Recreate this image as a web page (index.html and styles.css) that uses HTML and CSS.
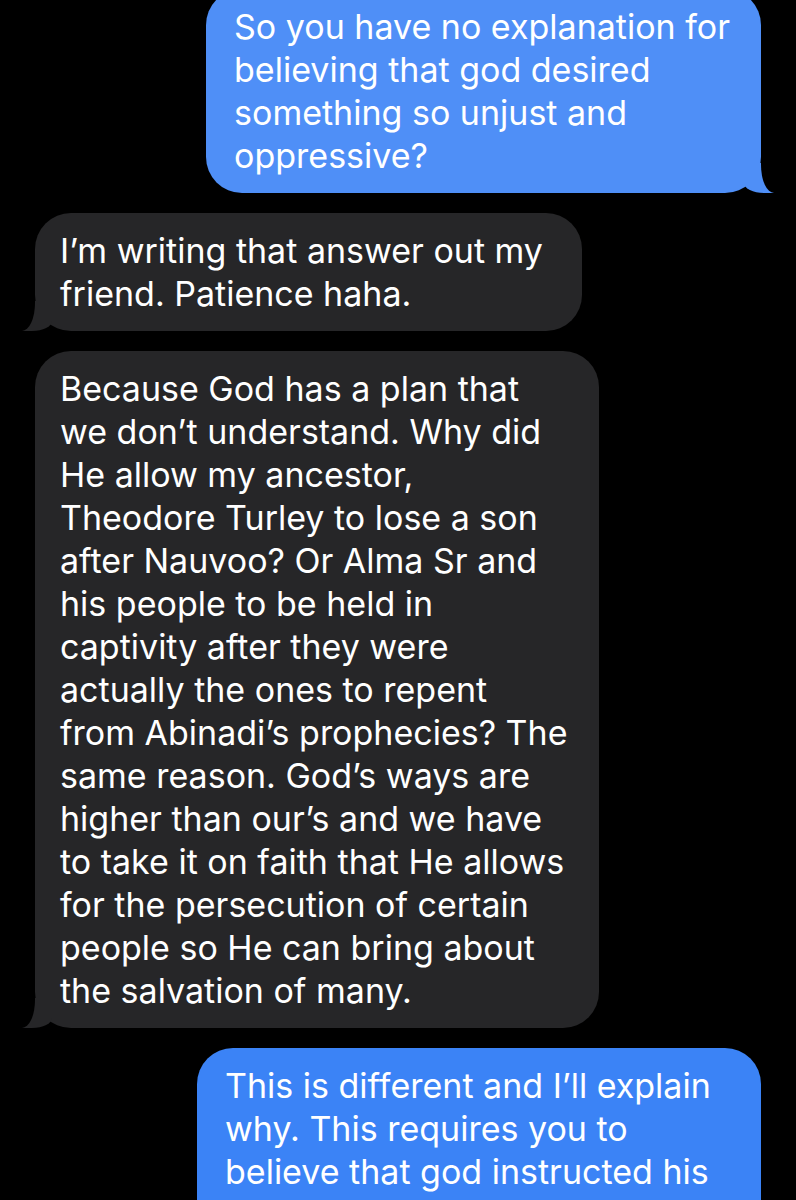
FILE: index.html
```html
<!DOCTYPE html>
<html lang="en">
<head>
    <meta charset="UTF-8">
    <meta name="viewport" content="width=device-width, initial-scale=1.0">
    <title>Messages</title>
    <link rel="stylesheet" href="styles.css">
</head>
<body>

    <div class="thread">
        <div class="bubble sent first">
            So you have no explanation for<br>
            believing that god desired<br>
            something so unjust and<br>
            oppressive?
        </div>

        <div class="bubble received short">
            I’m writing that answer out my<br>
            friend. Patience haha.
        </div>

        <div class="bubble received">
            Because God has a plan that<br>
            we don’t understand. Why did<br>
            He allow my ancestor,<br>
            Theodore Turley to lose a son<br>
            after Nauvoo? Or Alma Sr and<br>
            his people to be held in<br>
            captivity after they were<br>
            actually the ones to repent<br>
            from Abinadi’s prophecies? The<br>
            same reason. God’s ways are<br>
            higher than our’s and we have<br>
            to take it on faith that He allows<br>
            for the persecution of certain<br>
            people so He can bring about<br>
            the salvation of many.
        </div>

        <div class="bubble sent last">
            This is different and I’ll explain<br>
            why. This requires you to<br>
            believe that god instructed his
        </div>
    </div>

</body>
</html>
```

FILE: styles.css
```css
* {
    box-sizing: border-box;
}
body {
    margin: 0;
    background: #000;
    font-family: Inter, "Noto Sans", sans-serif;
    overflow: hidden;
    height: 1200px;
}
.thread {
    display: flex;
    flex-direction: column;
    gap: 20px;
    padding: 0 35px;
    margin-top: -11px;
}
.bubble {
    position: relative;
    width: fit-content;
    max-width: 564px;
    padding: 16px 31px 16px 25px;
    border-radius: 36px;
    color: #fff;
    font-size: 34px;
    line-height: 43px;
}
.sent {
    align-self: flex-end;
    background: #3b83f6;
    padding-left: 28px;
}
.sent.first {
    background: #4f8ff7;
}
.sent.last {
    width: 564px;
    padding-bottom: 80px;
}
.received {
    align-self: flex-start;
    background: #262628;
}
.received.short {
    padding-right: 39px;
}

/* tails */
.sent::before,
.received::before {
    content: "";
    position: absolute;
    bottom: 0;
    width: 30px;
    height: 30px;
    background: inherit;
}
.sent::after,
.received::after {
    content: "";
    position: absolute;
    bottom: 0;
    width: 20px;
    height: 31px;
    background: #000;
}
.sent::before {
    right: -13px;
    border-bottom-left-radius: 20px 10px;
}
.sent::after {
    right: -20px;
    border-bottom-left-radius: 13px 28px;
}
.received::before {
    left: -13px;
    border-bottom-right-radius: 20px 10px;
}
.received::after {
    left: -20px;
    border-bottom-right-radius: 13px 28px;
}
```
